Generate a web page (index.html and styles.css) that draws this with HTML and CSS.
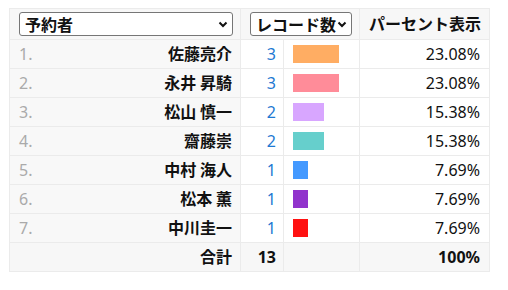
FILE: index.html
```html
<!DOCTYPE html>
<html lang="ja">
<head>
<meta charset="utf-8">
<link rel="stylesheet" href="styles.css">
</head>
<body>
<table class="tbl">
  <colgroup>
    <col class="c-name"><col class="c-count"><col class="c-bar"><col class="c-pct">
  </colgroup>
  <thead>
    <tr>
      <th class="h-name"><div class="sel sel-name"><span class="sel-text">予約者</span><svg class="chev" width="10" height="7" viewBox="0 0 10 7"><path d="M1.5 1.5 L5 5 L8.5 1.5" fill="none" stroke="#111" stroke-width="2"/></svg></div></th>
      <th class="h-count" colspan="2"><div class="sel sel-count"><span class="sel-text">レコード数</span><svg class="chev" width="10" height="7" viewBox="0 0 10 7"><path d="M1.5 1.5 L5 5 L8.5 1.5" fill="none" stroke="#111" stroke-width="2"/></svg></div></th>
      <th class="h-pct">パーセント表示</th>
    </tr>
  </thead>
  <tbody>
    <tr><td class="name"><span class="rank">1.</span><span class="who">佐藤亮介</span></td><td class="count">3</td><td class="barcell"><div class="bar" style="width:46px;background:#ffad63"></div></td><td class="pct">23.08%</td></tr>
    <tr><td class="name"><span class="rank">2.</span><span class="who">永井 昇騎</span></td><td class="count">3</td><td class="barcell"><div class="bar" style="width:46px;background:#ff8c99"></div></td><td class="pct">23.08%</td></tr>
    <tr><td class="name"><span class="rank">3.</span><span class="who">松山 慎一</span></td><td class="count">2</td><td class="barcell"><div class="bar" style="width:31px;background:#d8a6ff"></div></td><td class="pct">15.38%</td></tr>
    <tr><td class="name"><span class="rank">4.</span><span class="who">齋藤崇</span></td><td class="count">2</td><td class="barcell"><div class="bar" style="width:31px;background:#66cfcc"></div></td><td class="pct">15.38%</td></tr>
    <tr><td class="name"><span class="rank">5.</span><span class="who">中村 海人</span></td><td class="count">1</td><td class="barcell"><div class="bar" style="width:15px;background:#4499ff"></div></td><td class="pct">7.69%</td></tr>
    <tr><td class="name"><span class="rank">6.</span><span class="who">松本 薫</span></td><td class="count">1</td><td class="barcell"><div class="bar" style="width:15px;background:#9133cc"></div></td><td class="pct">7.69%</td></tr>
    <tr><td class="name"><span class="rank">7.</span><span class="who">中川圭一</span></td><td class="count">1</td><td class="barcell"><div class="bar" style="width:15px;background:#ff1111"></div></td><td class="pct">7.69%</td></tr>
  </tbody>
  <tfoot>
    <tr><td class="name total"><span class="who">合計</span></td><td class="count total">13</td><td class="barcell total"></td><td class="pct total">100%</td></tr>
  </tfoot>
</table>
</body>
</html>
```
FILE: styles.css
```css
html, body {
  margin: 0;
  padding: 0;
  background: #fff;
}
body {
  padding: 8px 0 0 9px;
  font-family: "Noto Sans", "Noto Sans CJK JP", sans-serif;
  font-size: 16px;
  color: #111;
}
.tbl {
  border-collapse: collapse;
  width: 480px;
  table-layout: fixed;
}
.c-name { width: 231px; }
.c-count { width: 43px; }
.c-bar { width: 76px; }
.c-pct { width: 130px; }
.tbl th, .tbl td {
  border: 1px solid #ebebeb;
  padding: 3px 8px 3px 9px;
  line-height: 22px;
  white-space: nowrap;
}
.tbl td {
  height: 29px;
  box-sizing: border-box;
  padding-top: 2px;
  padding-bottom: 2px;
}
.tbl th {
  background: #f7f7f7;
  font-weight: bold;
  text-align: left;
}
.tbl .h-pct {
  text-align: right;
  padding-right: 8px;
  padding-left: 0;
}
.sel {
  box-sizing: border-box;
  display: flex;
  align-items: center;
  justify-content: space-between;
  height: 24px;
  border: 1px solid #767676;
  border-radius: 3px;
  background: #fff;
  padding: 0 4px 0 5px;
  font-family: "Noto Sans CJK JP", sans-serif;
  font-weight: bold;
  font-size: 16px;
  line-height: 22px;
  color: #111;
}
.sel-name { width: 214px; }
.sel-count { width: 102px; gap: 1px; }
.chev { flex: none; }
.name {
  background: #f8f8f8;
  text-align: right;
}
.name .rank {
  float: left;
  color: #aaa;
  font-size: 16px;
}
.who {
  font-family: "Noto Sans CJK JP", sans-serif;
  font-weight: bold;
  line-height: 20px;
}
.tbl .count {
  text-align: right;
  color: #1e78d2;
  padding-right: 7px;
}
.barcell {
  vertical-align: middle;
}
.bar {
  height: 18px;
}
.tbl .pct {
  text-align: right;
  padding-right: 9px;
}
.tbl .total {
  background: #f7f7f7;
  font-weight: bold;
  color: #111;
}
```
